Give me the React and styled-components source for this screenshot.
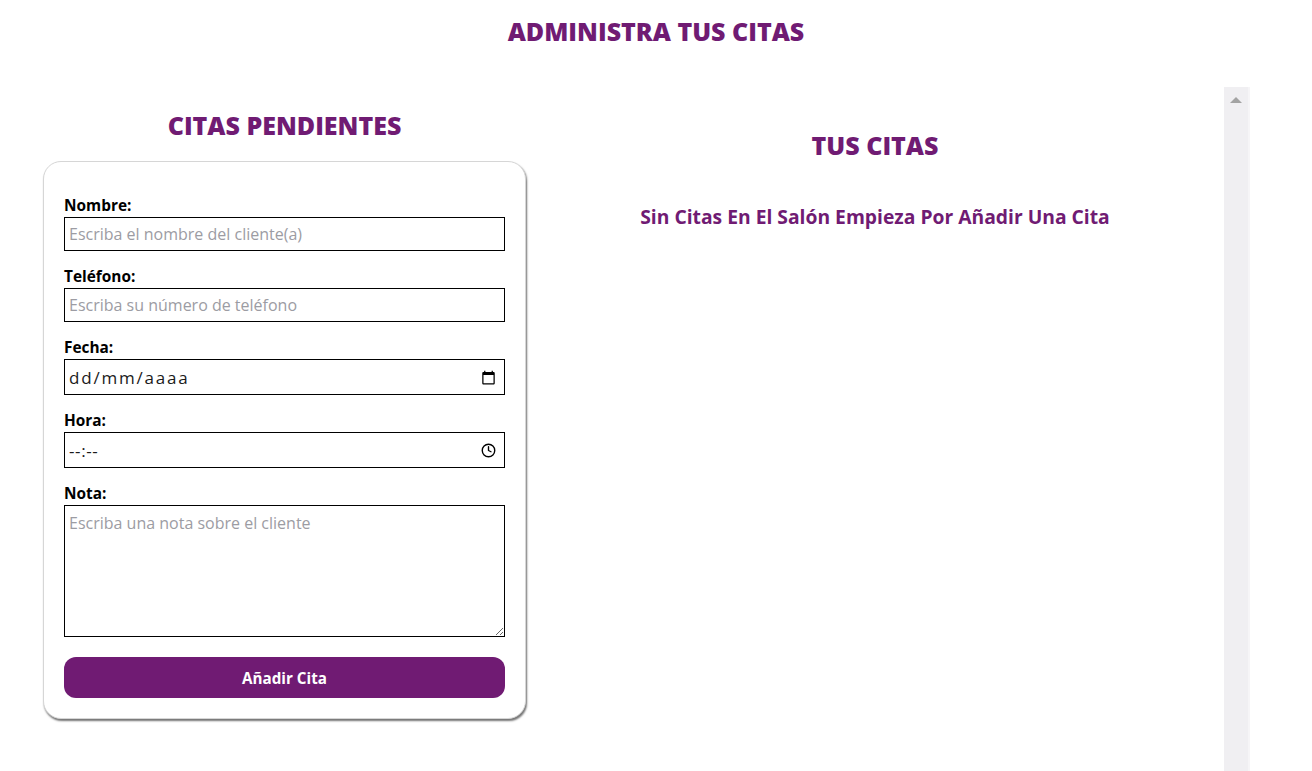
import React from 'react'
import styled, { createGlobalStyle } from 'styled-components'

const purple = '#701b73'

const GlobalStyle = createGlobalStyle`
    html, body{
        margin:0;
        overflow:hidden;
        background:#fff;
        font-family:"Open Sans", "Noto Sans", sans-serif;
    }
    *{ box-sizing:border-box; }
`

const CalendarIcon = () => (
    <svg width="15" height="15" viewBox="0 0 24 24">
        <path fill="#000" d="M20 3h-1V1h-2v2H7V1H5v2H4c-1.1 0-2 .9-2 2v16c0 1.1.9 2 2 2h16c1.1 0 2-.9 2-2V5c0-1.1-.9-2-2-2zm0 18H4V8h16v13z"/>
    </svg>
)

const ClockIcon = () => (
    <svg width="15" height="15" viewBox="0 0 24 24" fill="none" stroke="#000" strokeWidth="2.2" strokeLinecap="round" strokeLinejoin="round">
        <circle cx="12" cy="12" r="10"/>
        <path d="M12 6v6l4 2"/>
    </svg>
)

function App() {
    return (
        <>
            <GlobalStyle/>
            <Title>Administra tus citas</Title>
            <Main>
                <FormColumn>
                    <SectionTitle $top={22}>Citas pendientes</SectionTitle>
                    <Card>
                        <Field>
                            <Label htmlFor='nombre'>Nombre:</Label>
                            <Input id='nombre' placeholder='Escriba el nombre del cliente(a)'/>
                        </Field>
                        <Field>
                            <Label htmlFor='telefono'>Teléfono:</Label>
                            <Input id='telefono' placeholder='Escriba su número de teléfono'/>
                        </Field>
                        <Field>
                            <Label htmlFor='fecha'>Fecha:</Label>
                            <PickerBox>
                                <PickerInput id='fecha' placeholder='dd/mm/aaaa' $spacing={1.8}/>
                                <CalendarIcon/>
                            </PickerBox>
                        </Field>
                        <Field>
                            <Label htmlFor='hora'>Hora:</Label>
                            <PickerBox>
                                <PickerInput id='hora' placeholder='--:--' $spacing={0.6}/>
                                <ClockIcon/>
                            </PickerBox>
                        </Field>
                        <Field>
                            <Label htmlFor='nota'>Nota:</Label>
                            <TextArea id='nota' placeholder='Escriba una nota sobre el cliente'/>
                        </Field>
                        <SubmitBtn type='button'>Añadir Cita</SubmitBtn>
                    </Card>
                </FormColumn>
                <ListPanel>
                    <ListContent>
                        <SectionTitle $top={42}>Tus citas</SectionTitle>
                        <Empty>Sin Citas En El Salón Empieza Por Añadir Una Cita</Empty>
                    </ListContent>
                    <ScrollTrack>
                        <ScrollArrow/>
                    </ScrollTrack>
                </ListPanel>
            </Main>
        </>
    )
}

const Title = styled.h1`
    margin:0;
    padding-top:15px;
    height:87px;
    text-align:center;
    text-transform:uppercase;
    color:${purple};
    font-size:25px;
    font-weight:800;
    line-height:32px;
`

const Main = styled.main`
    display:flex;
    padding-left:43px;
`

const FormColumn = styled.section`
    width:483px;
    flex-shrink:0;
`

const SectionTitle = styled.h2`
    margin:${p => p.$top}px 0 0;
    text-align:center;
    text-transform:uppercase;
    color:${purple};
    font-size:25px;
    font-weight:800;
    line-height:32px;
`

const Card = styled.form`
    margin-top:20px;
    padding:35px 20px 20px;
    border:1px solid #d6d6d6;
    border-radius:18px;
    box-shadow:1px 2px 2px rgba(0,0,0,0.55);
    background:#fff;
`

const Field = styled.div`
    margin-bottom:17px;
`

const Label = styled.label`
    display:block;
    margin-bottom:2px;
    font-size:15.4px;
    font-weight:700;
    line-height:18px;
    color:#000;
`

const Input = styled.input`
    display:block;
    width:100%;
    height:34px;
    padding:0 4px;
    border:1px solid #000;
    font-family:inherit;
    font-size:16px;
    outline:none;
    &::placeholder{ color:#9c9ca3; }
`

const PickerBox = styled.div`
    display:flex;
    align-items:center;
    height:36px;
    padding-right:8px;
    border:1px solid #000;
    background:#fff;
`

const PickerInput = styled.input`
    flex:1;
    min-width:0;
    height:100%;
    padding:0 4px;
    border:none;
    font-family:inherit;
    font-size:17px;
    letter-spacing:${p => p.$spacing}px;
    outline:none;
    &::placeholder{ color:#1a1a1a; }
`

const TextArea = styled.textarea`
    display:block;
    width:100%;
    height:132px;
    padding:6px 4px;
    border:1px solid #000;
    font-family:inherit;
    font-size:16px;
    outline:none;
    &::placeholder{ color:#9c9ca3; }
`

const SubmitBtn = styled.button`
    display:block;
    width:100%;
    height:41px;
    margin-top:20px;
    border:none;
    border-radius:12px;
    background:${purple};
    color:#fff;
    font-family:inherit;
    font-size:15.2px;
    font-weight:700;
    cursor:pointer;
`

const ListPanel = styled.section`
    display:flex;
    width:724px;
    height:100vh;
`

const ListContent = styled.div`
    flex:1;
`

const ScrollTrack = styled.div`
    width:26px;
    flex-shrink:0;
    background:#f0eff2;
    border-right:2px solid #f6f5f7;
    padding-top:10px;
    display:flex;
    justify-content:center;
`

const ScrollArrow = styled.span`
    width:0;
    height:0;
    border-left:6px solid transparent;
    border-right:6px solid transparent;
    border-bottom:6px solid #a3a3a3;
`

const Empty = styled.p`
    margin:42px 0 0;
    text-align:center;
    color:${purple};
    font-size:19.3px;
    font-weight:700;
`

export default App
